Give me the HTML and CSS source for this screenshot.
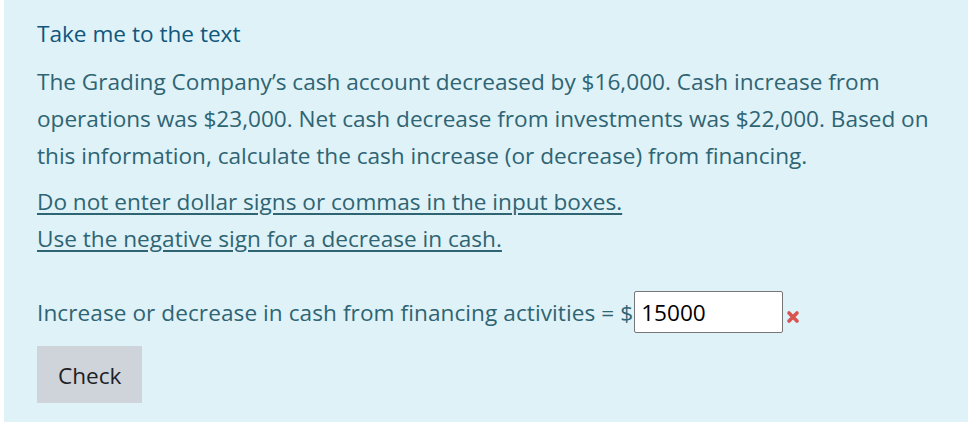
FILE: index.html
```html
<!DOCTYPE html>
<html lang="en">
<head>
<meta charset="utf-8">
<title>Question</title>
<link rel="stylesheet" href="styles.css">
</head>
<body>
<div class="que">
  <p class="intro"><a class="text-link" href="#">Take me to the text</a></p>
  <p class="prompt">The Grading Company’s cash account decreased by $16,000. Cash increase from<br>operations was $23,000. Net cash decrease from investments was $22,000. Based on<br>this information, calculate the cash increase (or decrease) from financing.</p>
  <p class="notes"><span class="under">Do not enter dollar signs or commas in the input boxes.</span><br><span class="under">Use the negative sign for a decrease in cash.</span></p>
  <div class="answer-row">
    <span class="label">Increase or decrease in cash from financing activities = $</span>
    <input class="answer" type="text" value="15000">
    <svg class="wrong" viewBox="0 0 14 14" width="14" height="14" aria-label="Incorrect">
      <path d="M3 3 L11 11 M11 3 L3 11" stroke="#d9534f" stroke-width="3.6" stroke-linecap="round"/>
    </svg>
  </div>
  <button class="check" type="button">Check</button>
</div>
</body>
</html>
```
FILE: styles.css
```css
html, body {
  margin: 0;
  padding: 0;
  background: #ffffff;
}
body {
  font-family: "Open Sans", "Liberation Sans", sans-serif;
  font-size: 22.6px;
  line-height: 37px;
  color: #2f6473;
}
.que {
  margin-left: 4px;
  background: #def2f8;
  padding: 15px 20px 19px 33px;
}
p {
  margin: 0;
}
.intro {
  margin-bottom: 11px;
}
.text-link {
  color: #10577e;
  text-decoration: none;
}
.prompt {
  margin-bottom: 9px;
  white-space: nowrap;
}
.notes {
  margin-bottom: 34px;
}
.under {
  text-decoration: underline;
  text-decoration-thickness: 2px;
  text-underline-offset: 3px;
}
.answer-row {
  display: flex;
  align-items: baseline;
}
.label {
  letter-spacing: 0.07px;
}
.answer {
  box-sizing: border-box;
  width: 149px;
  height: 42px;
  margin: 0 0 0 1px;
  padding: 0 6px;
  border: 1px solid #767676;
  border-radius: 2px;
  background: #ffffff;
  font-family: inherit;
  font-size: 22.6px;
  color: #000000;
}
.wrong {
  align-self: flex-start;
  margin-left: 3px;
  margin-top: 19px;
}
.check {
  display: block;
  margin-top: 13px;
  padding: 11px 21px 9px;
  border: 0;
  border-radius: 0;
  background: #ced4da;
  color: #1d2125;
  font-family: inherit;
  font-size: 22.6px;
  line-height: 37px;
}
```
